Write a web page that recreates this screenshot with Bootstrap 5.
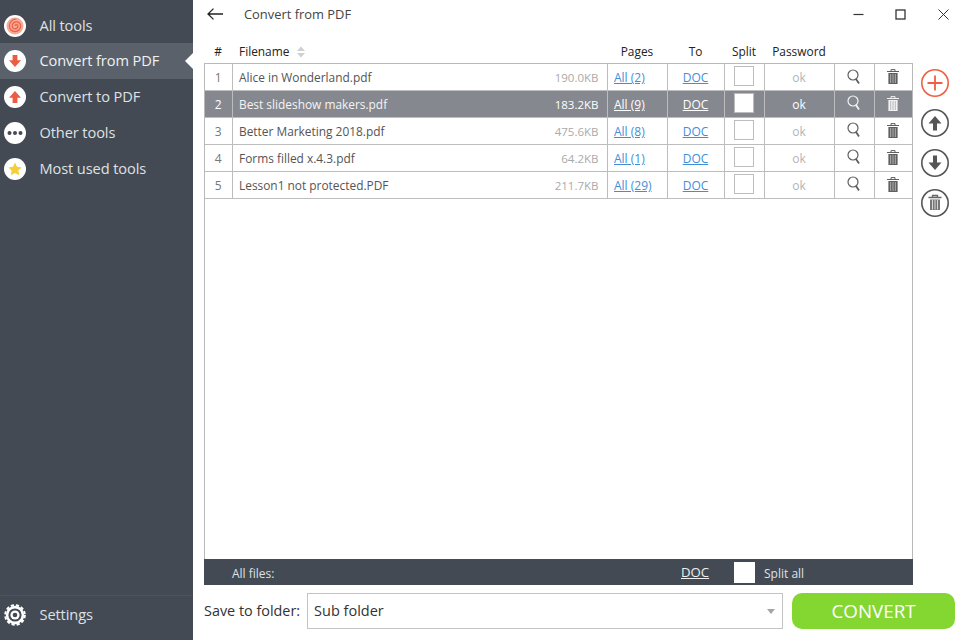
<!DOCTYPE html>
<html lang="en"><head><meta charset="utf-8"><title>Convert from PDF</title>
<link href="https://cdn.jsdelivr.net/npm/bootstrap@5.3.0/dist/css/bootstrap.min.css" rel="stylesheet">
<style>
html,body{height:640px;overflow:hidden}
body{font-family:"Open Sans","Noto Sans",sans-serif;background:#fff;color:#444}
.app-shell{width:960px;height:640px}
.side-bar{width:193px;background:#434a54;flex:none;color:#dfe1e4;font-size:14.6px}
.side-item{height:36px;padding-left:4px;gap:13.500px;position:relative;letter-spacing:-.1px}
.side-item.is-on{background:#5a616b;color:#f0f1f2}
.side-item.is-on::after{content:"";position:absolute;right:0;top:10px;border:8px solid transparent;border-right-color:#fff;border-left:0}
.side-list{padding-top:8px}
.side-list .side-item:first-child{height:35px}
.side-foot{height:45px;border-top:1px solid #4b525c;padding-bottom:7px}
.dot-ico{width:22px;height:22px;flex:none;display:block}
.main-pane{min-width:0}
.title-row{height:28px;padding-left:14px;font-size:12.900px;color:#444}
.title-text{margin-left:21px;padding-top:1px}
.win-ctl{gap:26.500px;margin-left:auto;padding-right:9px}
.win-ctl span{width:16px;display:flex;justify-content:center}
.head-row{padding-left:11px;height:35px;padding-top:14.500px}
.grid-tbl{table-layout:fixed;border-collapse:collapse;width:709px;font-size:12px}
.grid-head th{font-weight:400;color:#222;text-align:center;padding:0;height:18px;font-size:11.900px}
.grid-head th.fn-h{text-align:left;padding-left:7px}
.work-row{padding-left:11px;height:496px;gap:8px}
.file-box{width:709px;border:1px solid #b9b9b9;border-bottom:0;background:#fff;height:496px}
.file-box .grid-tbl{width:707px}
.grid-tbl.file-tbl td{border:1px solid #bdbdbd;border-top:0;padding:3px 0 0;height:27px;text-align:center;color:#777}
.file-tbl tr:first-child td{height:26px}
.file-tbl td:first-child{border-left:0}.file-tbl td:last-child{border-right:0}
.grid-tbl.file-tbl td.fn-c{text-align:left;padding:3px 8px 0 6.500px;color:#555;font-size:11.900px}
.fn-c .file-size{float:right;color:#aaa;font-size:11.500px}
.file-tbl a{color:#3f8fd8}
.grid-tbl.file-tbl td.ok-txt{color:#b4b4b4}
.grid-tbl.file-tbl td.ico-c{padding:0 0 2px}
.grid-tbl.file-tbl td.tick-c{padding:0 0 1px}
.grid-tbl.file-tbl td.pg-c{text-align:left;padding-left:6.500px}
.tick-box{display:block;width:20px;height:20px;margin:0 auto;border:1px solid #bdbdbd;background:#fff}
.grid-tbl.file-tbl tr.is-sel td{background:#85888f;color:#fff}
.grid-tbl.file-tbl tr.is-sel td.fn-c{color:#f4f4f4}
.file-tbl tr.is-sel .file-size,.file-tbl tr.is-sel a{color:#fff}
.all-bar{width:709px;height:26px;background:#434a54;color:#dfe1e4;font-size:12px;margin-left:11px;position:relative}
.all-lbl{width:477px;padding-left:28px;padding-top:3px}
.all-doc{color:#eee;width:53px;font-size:13.200px;padding-top:1px}
.all-tick{width:21px;height:21px;background:#fff;display:block;margin-left:0}
.all-split{margin-left:9px;padding-top:3px}
.act-col{gap:12px;padding-top:6px;width:28px}
.act-col svg{display:block;width:28px;height:28px}
.save-row{padding:8px 0 0 11px;gap:7px;font-size:14.400px;color:#333}
.fold-sel{width:476px;height:36px;border:1px solid #c4c4c4;padding:0 7px 0 6px;font-size:14.500px;color:#333}
.sel-arrow{border:4px solid transparent;border-top:5px solid #a5a5a5;border-bottom:0}
.go-btn{width:163px;height:36px;margin-left:2px;background:#84d631;color:#fff;border:0;border-radius:10px;font-size:18.800px;padding:0;line-height:1}
.go-btn:hover{background:#84d631;color:#fff}
</style></head><body>
<div class="app-shell d-flex">
<aside class="side-bar d-flex flex-column">
 <nav class="side-list flex-grow-1 d-flex flex-column">
  <div class="side-item d-flex align-items-center"><svg class="dot-ico" viewBox="0 0 22 22"><circle cx="11" cy="11" r="11" fill="#fff"/><circle cx="11" cy="11" r="8.500" fill="#f6a995"/><path d="M11 11a1.400 1.400 0 0 1 2.800 0a2.800 2.800 0 0 1-5.600 0a4.200 4.200 0 0 1 8.400 0a5.600 5.600 0 0 1-11.200 0a7 7 0 0 1 7-7" fill="none" stroke="#ea5f45" stroke-width="1.200"/></svg><span>All tools</span></div>
  <div class="side-item is-on d-flex align-items-center"><svg class="dot-ico" viewBox="0 0 22 22"><circle cx="11" cy="11" r="11" fill="#fff"/><path d="M8.600 5h4.800v5.200H17L11 17 5 10.200h3.600z" fill="#ec5c40"/></svg><span>Convert from PDF</span></div>
  <div class="side-item d-flex align-items-center"><svg class="dot-ico" viewBox="0 0 22 22"><circle cx="11" cy="11" r="11" fill="#fff"/><path d="M8.600 17h4.800v-5.200H17L11 5 5 11.800h3.600z" fill="#ec5c40"/></svg><span>Convert to PDF</span></div>
  <div class="side-item d-flex align-items-center"><svg class="dot-ico" viewBox="0 0 22 22"><circle cx="11" cy="11" r="11" fill="#fff"/><circle cx="5.500" cy="11" r="2" fill="#434a54"/><circle cx="11" cy="11" r="2" fill="#434a54"/><circle cx="16.500" cy="11" r="2" fill="#434a54"/></svg><span>Other tools</span></div>
  <div class="side-item d-flex align-items-center"><svg class="dot-ico" viewBox="0 0 22 22"><circle cx="11" cy="11" r="11" fill="#fff"/><path d="M11 4.500l2 4.300 4.700.6-3.400 3.200.9 4.600L11 14.900l-4.200 2.300.9-4.600-3.400-3.200 4.700-.6z" fill="#f4cf3a"/></svg><span>Most used tools</span></div>
 </nav>
 <div class="side-foot side-item d-flex align-items-center"><svg class="dot-ico" viewBox="0 0 22 22"><circle cx="11" cy="11" r="9.200" fill="#fff"/><circle cx="11" cy="11" r="9.800" fill="none" stroke="#fff" stroke-width="2" stroke-dasharray="3.200 2"/><circle cx="11" cy="11" r="6.600" fill="#434a54"/><circle cx="11" cy="11" r="4.600" fill="#fff"/><circle cx="11" cy="11" r="2.300" fill="#434a54"/></svg><span>Settings</span></div>
</aside>
<main class="main-pane flex-grow-1 d-flex flex-column">
 <div class="title-row d-flex align-items-center">
  <svg width="16" height="12" viewBox="0 0 16 12" fill="none" stroke="#222" stroke-width="1.300"><path d="M16 6H1M6.500.6L1 6l5.500 5.400"/></svg>
  <span class="title-text">Convert from PDF</span>
  <div class="win-ctl d-flex align-items-center">
   <span><svg width="11" height="11" viewBox="0 0 11 11"><path d="M.5 5.500h10" stroke="#333" stroke-width="1.200"/></svg></span>
   <span><svg width="11" height="11" viewBox="0 0 11 11" fill="none"><rect x="1" y="1" width="9" height="9" stroke="#333" stroke-width="1.300"/></svg></span>
   <span><svg width="11" height="11" viewBox="0 0 11 11" fill="none"><path d="M.5.500l10 10M10.500.500l-10 10" stroke="#333"/></svg></span>
  </div>
 </div>
 <div class="head-row">
  <table class="grid-tbl grid-head"><colgroup><col style="width:28px"><col style="width:375px"><col style="width:60px"><col style="width:57px"><col style="width:40px"><col style="width:70px"><col style="width:40px"><col style="width:39px"></colgroup>
  <tr><th>#</th><th class="fn-h">Filename <svg class="ms-1" width="8" height="12" viewBox="0 0 8 12"><path d="M4 .5L8 5H0zM4 11.500L0 7h8z" fill="#d0d0d0"/></svg></th><th>Pages</th><th>To</th><th>Split</th><th>Password</th><th></th><th></th></tr></table>
 </div>
 <div class="work-row d-flex">
  <div class="file-box">
   <table class="grid-tbl file-tbl"><colgroup><col style="width:27px"><col style="width:375px"><col style="width:60px"><col style="width:57px"><col style="width:40px"><col style="width:70px"><col style="width:40px"><col style="width:38px"></colgroup>
   <tbody id="rows"></tbody></table>
  </div>
  <div class="act-col d-flex flex-column">
   <svg viewBox="0 0 28 28" fill="none" stroke="#ee5f43" stroke-width="1.600"><circle cx="14" cy="14" r="13.200"/><path d="M14 6.500v15M6.500 14h15" stroke-width="1.800"/></svg>
   <svg viewBox="0 0 28 28" fill="none"><circle cx="14" cy="14" r="13.200" stroke="#555" stroke-width="1.600"/><path d="M12 21.500v-7H7.500L14 7l6.500 7.500H16v7z" fill="#555"/></svg>
   <svg viewBox="0 0 28 28" fill="none"><circle cx="14" cy="14" r="13.200" stroke="#555" stroke-width="1.600"/><path d="M12 6.500v7H7.500L14 21l6.500-7.500H16v-7z" fill="#555"/></svg>
   <svg viewBox="0 0 28 28" fill="none"><circle cx="14" cy="14" r="13.200" stroke="#555" stroke-width="1.600"/><path d="M7.500 8.500h13M11.500 8V6.500h5V8" stroke="#666" stroke-width="1.300"/><path d="M9 10.500h10V21H9z" fill="#777"/><path d="M11.500 11v9.500M14 11v9.500M16.500 11v9.500" stroke="#fff" stroke-width=".7"/></svg>
  </div>
 </div>
 <div class="all-bar d-flex align-items-center">
  <span class="all-lbl">All files:</span><a href="#" class="all-doc">DOC</a><span class="all-tick"></span><span class="all-split">Split all</span>
 </div>
 <div class="save-row d-flex align-items-center">
  <span>Save to folder:</span>
  <div class="fold-sel d-flex align-items-center justify-content-between"><span>Sub folder</span><span class="sel-arrow"></span></div>
  <button type="button" class="btn go-btn">CONVERT</button>
 </div>
</main>
</div>
<script>
var rows=[["Alice in Wonderland.pdf","190.0KB","All (2)"],["Best slideshow makers.pdf","183.2KB","All (9)"],["Better Marketing 2018.pdf","475.6KB","All (8)"],["Forms filled x.4.3.pdf","64.2KB","All (1)"],["Lesson1 not protected.PDF","211.7KB","All (29)"]];
var lens='<svg width="14" height="16" viewBox="0 0 14 16" fill="none" stroke="currentColor" stroke-width="1.200"><circle cx="6" cy="6" r="5"/><path d="M9 10l3 4.500" stroke-width="1.800"/></svg>';
var bin='<svg width="12" height="15" viewBox="0 0 12 15" fill="none"><path d="M0 2.500h12M4 2.300V.6h4v1.700" stroke="currentColor" stroke-width="1"/><path d="M1.400 4h9.200v11H1.400z" fill="currentColor"/><path d="M3.700 5v9M6 5v9M8.300 5v9" stroke="var(--bin-gap)" stroke-width=".8"/></svg>';
document.getElementById("rows").innerHTML=rows.map(function(r,i){var s=i==1;var c=s?"color:#f2f2f2;--bin-gap:#a9abb0":"color:#5f5f5f;--bin-gap:#c8c8c8";
return '<tr class="'+(s?"is-sel":"")+'"><td>'+(i+1)+'</td><td class="fn-c">'+r[0]+'<span class="file-size">'+r[1]+'</span></td><td class="pg-c"><a href="#">'+r[2]+'</a></td><td><a href="#">DOC</a></td><td class="tick-c"><span class="tick-box"></span></td><td class="ok-txt">ok</td><td class="ico-c" style="'+c+'">'+lens+'</td><td class="ico-c" style="'+c+'">'+bin+'</td></tr>'}).join("");
</script>
<script src="https://cdn.jsdelivr.net/npm/bootstrap@5.3.0/dist/js/bootstrap.bundle.min.js"></script>
</body></html>
